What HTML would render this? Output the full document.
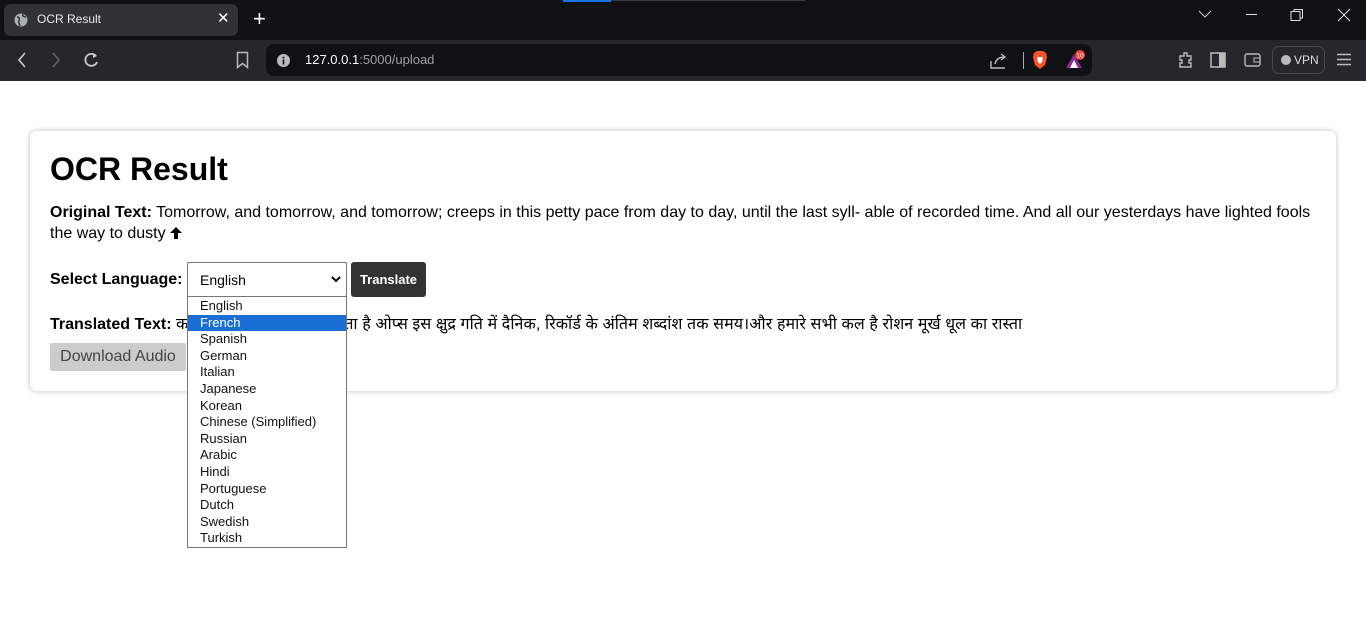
<!DOCTYPE html>
<html><head><meta charset="utf-8"><style>
*{box-sizing:border-box}
body{margin:0;width:1366px;height:619px;overflow:hidden;background:#fff;font-family:"Liberation Sans",Arial,sans-serif;position:relative}
.tabbar{position:absolute;top:0;left:0;width:1366px;height:40px;background:#0f1115}
.tab{position:absolute;left:4px;top:4px;width:234px;height:32px;background:#2f3338;border-radius:7px;color:#e8eaed;font-size:12px}
.toolbar{position:absolute;top:40px;left:0;width:1366px;height:41px;background:#24282d}
.url{position:absolute;left:266px;top:4px;width:826px;height:32px;background:#0f1115;border-radius:8px;color:#9aa0a6;font-size:13px}
.ic{position:absolute}
.card{position:absolute;left:30px;top:131px;width:1306px;height:260px;border-radius:7px;box-shadow:0 0 6px rgba(0,0,0,.25);background:#fff;padding:0 20px}
h1{position:absolute;left:20px;top:20px;margin:0;font-size:32px;font-weight:bold}
p{margin:0;font-size:16px;line-height:21px}
.dd{position:absolute;left:187px;top:296px;width:160px;height:252px;background:#fff;border:1px solid #767676;font-size:13px;padding-top:1px}
.dd div{height:16.6px;line-height:16px;padding-left:12px;color:#111}
.dd .sel{background:#1a6fd6;color:#fff}
</style></head><body>
<div class="tabbar">
 <div class="tab">
  <svg class="ic" style="left:10px;top:9px" width="14" height="14"><circle cx="7" cy="7" r="6.5" fill="#aab0b6"/><path d="M3 4c2 0 3 2 2 4s1 3 1 5M9 1c-1 2 1 3 3 3" stroke="#2f3338" stroke-width="1.5" fill="none"/></svg>
  <span style="position:absolute;left:33px;top:8px">OCR Result</span>
  <span style="position:absolute;left:213px;top:5px;font-size:15px;color:#fff">✕</span>
 </div>
 <span style="position:absolute;left:253px;top:6px;color:#fff;font-size:22px">+</span>
 <div style="position:absolute;left:563px;top:0;width:48px;height:2px;background:#1a73e8"></div>
 <div style="position:absolute;left:611px;top:0;width:194px;height:1px;background:#3a3e44"></div>
 <svg class="ic" style="left:1198px;top:9px" width="14" height="10"><path d="M1 2l6 6 6-6" stroke="#ccc" fill="none"/></svg>
 <div style="position:absolute;left:1246px;top:14px;width:11px;height:1px;background:#ddd"></div>
 <svg class="ic" style="left:1290px;top:8px" width="14" height="14"><rect x="1" y="3.5" width="9" height="9" stroke="#ddd" fill="none"/><path d="M4 3.5V1.5h8.5V10H10" stroke="#ddd" fill="none"/></svg>
 <svg class="ic" style="left:1337px;top:8px" width="14" height="14"><path d="M1 1l12 12M13 1L1 13" stroke="#ddd"/></svg>
</div>
<div class="toolbar">
 <svg class="ic" style="left:17px;top:12px" width="10" height="16"><path d="M8 1L2 8l6 7" stroke="#ccc" stroke-width="1.6" fill="none"/></svg>
 <svg class="ic" style="left:51px;top:12px" width="10" height="16"><path d="M2 1l6 7-6 7" stroke="#666" stroke-width="1.6" fill="none"/></svg>
 <svg class="ic" style="left:82px;top:11px" width="18" height="18"><path d="M14 5A6 6 0 1 0 15 11" stroke="#ccc" stroke-width="1.8" fill="none"/><path d="M11 2l4 3-4 2z" fill="#ccc"/></svg>
 <svg class="ic" style="left:236px;top:11px" width="13" height="18"><path d="M1.5 1.5h10v15l-5-4-5 4z" stroke="#bbb" stroke-width="1.5" fill="none"/></svg>
 <div class="url">
  <svg class="ic" style="left:11px;top:10px" width="13" height="13"><circle cx="6.5" cy="6.5" r="6.5" fill="#bbb"/><rect x="5.7" y="5.5" width="1.6" height="5" fill="#0f1115"/><circle cx="6.5" cy="3.6" r="1" fill="#0f1115"/></svg>
  <span style="position:absolute;left:39px;top:8px"><span style="color:#fff">127.0.0.1</span>:5000/upload</span>
  <svg class="ic" style="left:724px;top:9px" width="18" height="16"><path d="M1 8v7h14M5 11c1-5 5-7 10-7M11 1l4 3-4 3" stroke="#bbb" stroke-width="1.4" fill="none"/></svg>
  <div style="position:absolute;left:757px;top:8px;width:1px;height:17px;background:#aaa"></div>
  <svg class="ic" style="left:766px;top:6px" width="16" height="20"><path d="M2 3l3-2h6l3 2 1 4-2 8-5 4-5-4-2-8z" fill="#fb542b"/><path d="M5 7h6l-1 5-2 2-2-2z" fill="#fff"/></svg>
  <svg class="ic" style="left:798px;top:6px" width="26" height="20"><path d="M2 18L10 4l8 14z" fill="#8b2a8f"/><path d="M6 18l4-8 4 8z" fill="#fff"/><circle cx="16" cy="5" r="5" fill="#e8453c"/><text x="16" y="7.5" font-size="6.5" fill="#fff" text-anchor="middle" font-family="Liberation Sans">10</text></svg>
 </div>
 <svg class="ic" style="left:1177px;top:11px" width="17" height="18"><path d="M3 5h4V2h3v3h4v4h-2v3h2v4H3v-4h2V9H3z" stroke="#bbb" stroke-width="1.4" fill="none"/></svg>
 <svg class="ic" style="left:1210px;top:12px" width="16" height="16"><rect x="1" y="1" width="14" height="14" stroke="#bbb" stroke-width="1.5" fill="none"/><rect x="9" y="1" width="6" height="14" fill="#bbb"/></svg>
 <svg class="ic" style="left:1244px;top:12px" width="17" height="15"><rect x="1" y="2" width="15" height="12" rx="2" stroke="#bbb" stroke-width="1.4" fill="none"/><rect x="10" y="6" width="6" height="4" stroke="#bbb" fill="none"/></svg>
 <div style="position:absolute;left:1272px;top:6px;width:53px;height:28px;border:1px solid #454a50;border-radius:7px;color:#ddd;font-size:12px">
  <span style="position:absolute;left:8px;top:8px;width:10px;height:10px;border-radius:5px;background:#bbb"></span>
  <span style="position:absolute;left:21px;top:6px">VPN</span></div>
 <svg class="ic" style="left:1337px;top:13px" width="14" height="13"><path d="M0 1.5h14M0 6.5h14M0 11.5h14" stroke="#bbb" stroke-width="1.5"/></svg>
</div>

<div class="card">
 <h1>OCR Result</h1>
 <p style="position:absolute;left:20px;right:20px;top:71px"><b>Original Text:</b> Tomorrow, and tomorrow, and tomorrow; creeps in this petty pace from day to day, until the last syll- able of recorded time. And all our yesterdays have lighted fools the way to dusty <svg width="12" height="12" style="vertical-align:-1px"><path d="M6 0L0 6h4v6h4V6h4z" fill="#000"/></svg></p>
 <p style="position:absolute;left:20px;top:138px"><b>Select Language:</b></p>
 <div style="position:absolute;left:157px;top:131px;width:160px;height:35px;border:1px solid #767676;border-radius:2px;font-size:14px;padding:9px 12px">English
  <svg style="position:absolute;right:5px;top:13px" width="10" height="8"><path d="M1 1l4 4 4-4" stroke="#000" stroke-width="2" fill="none"/></svg></div>
 <div style="position:absolute;left:321px;top:131px;width:75px;height:35px;background:#333;border-radius:3px;color:#fff;font-size:13px;font-weight:bold;line-height:35px;text-align:center">Translate</div>
 <p style="position:absolute;left:20px;top:183px;white-space:nowrap"><b>Translated Text:</b> <span style="font-family:'Liberation Sans','Noto Sans Devanagari','Lohit Devanagari',sans-serif;letter-spacing:0.1px">कल, और कल, और कल; रेंगता है ओप्स इस क्षुद्र गति में दैनिक, रिकॉर्ड के अंतिम शब्दांश तक समय।और हमारे सभी कल है रोशन मूर्ख धूल का रास्ता</span></p>
 <div style="position:absolute;left:20px;top:212px;width:136px;height:28px;background:#ccc;border-radius:2px;color:#444;font-size:16px;line-height:28px;text-align:center">Download Audio</div>
</div>
<div class="dd">
 <div>English</div><div class="sel">French</div><div>Spanish</div><div>German</div><div>Italian</div><div>Japanese</div><div>Korean</div><div>Chinese (Simplified)</div><div>Russian</div><div>Arabic</div><div>Hindi</div><div>Portuguese</div><div>Dutch</div><div>Swedish</div><div>Turkish</div>
</div>
</body></html>
